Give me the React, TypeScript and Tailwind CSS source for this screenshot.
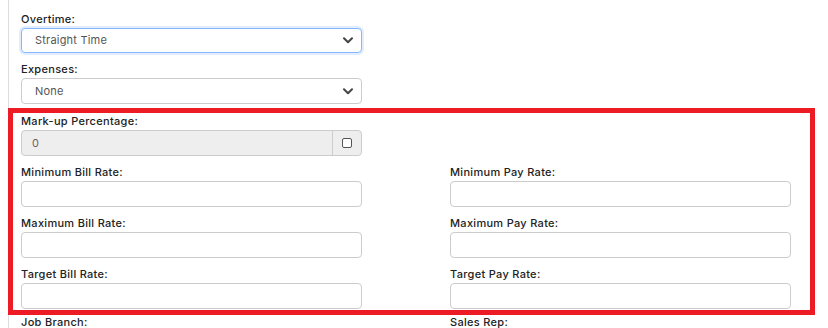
import React from 'react';

const font = { fontFamily: 'Inter, "Open Sans", sans-serif' };

function Chevron() {
  return (
    <svg width="10" height="7" viewBox="0 0 10 7" className="shrink-0">
      <path d="M1 1.2 L5 5.2 L9 1.2" fill="none" stroke="#444" strokeWidth="2" strokeLinecap="round" strokeLinejoin="round" />
    </svg>
  );
}

function Label({ text }: { text: string }) {
  return <div className="h-[16px] mb-px text-[11px] leading-[16px] font-medium tracking-[0.3px] text-[#222]">{text}</div>;
}

function SelectField({ label, value, focused }: { label: string; value: string; focused?: boolean }) {
  return (
    <div className="w-[341px] mb-[8px]">
      <Label text={label} />
      <div
        className={
          focused
            ? 'h-[25px] flex items-center justify-between pl-[13px] pr-[8px] rounded-[4px] border border-[#86b7fe] shadow-[0_0_0_2px_rgba(13,110,253,0.12)] bg-white'
            : 'h-[26px] flex items-center justify-between pl-[13px] pr-[8px] rounded-[4px] border border-[#ccc] bg-white'
        }
      >
        <span className="text-[11px] tracking-[0.2px] text-[#555]">{value}</span>
        <Chevron />
      </div>
    </div>
  );
}

function TextField({ label }: { label: string }) {
  return (
    <div className="w-[341px] mb-[8px]">
      <Label text={label} />
      <div className="h-[26px] rounded-[4px] border border-[#ccc] bg-white" />
    </div>
  );
}

export default function App() {
  return (
    <div className="w-[828px] h-[328px] bg-white overflow-hidden pl-[8px]" style={font}>
      <div className="h-full border-l border-[#ddd] pl-[12px] pt-[11px]">
        <SelectField label="Overtime:" value="Straight Time" focused />
        <SelectField label="Expenses:" value="None" />

        <div className="-ml-[13px] -mt-[4px] w-[807px] border-[5px] border-[#ed1c24] pl-[8px] pb-px">
          <div className="w-[341px] mb-[8px]">
            <Label text="Mark-up Percentage:" />
            <div className="h-[26px] flex rounded-[4px] border border-[#ccc] bg-[#eee]">
              <div className="flex-1 flex items-center pl-[10px] text-[11px] text-[#7a5c5c]">0</div>
              <div className="w-[29px] border-l border-[#ccc] flex items-center justify-center">
                <span className="w-[10px] h-[10px] border border-[#555] rounded-[2px] bg-white" />
              </div>
            </div>
          </div>
          <div className="grid grid-cols-[341px_341px] gap-x-[88px]">
            <TextField label="Minimum Bill Rate:" />
            <TextField label="Minimum Pay Rate:" />
            <TextField label="Maximum Bill Rate:" />
            <TextField label="Maximum Pay Rate:" />
            <div className="w-[341px]">
              <Label text="Target Bill Rate:" />
              <div className="h-[26px] rounded-[4px] border border-[#ccc] bg-white" />
            </div>
            <div className="w-[341px]">
              <Label text="Target Pay Rate:" />
              <div className="h-[26px] rounded-[4px] border border-[#ccc] bg-white" />
            </div>
          </div>
        </div>

        <div className="grid grid-cols-[341px_341px] gap-x-[88px] text-[11px] leading-[14px] font-medium tracking-[0.3px] text-[#222]">
          <div className="h-[14px]">Job Branch:</div>
          <div className="h-[14px]">Sales Rep:</div>
        </div>
      </div>
    </div>
  );
}
